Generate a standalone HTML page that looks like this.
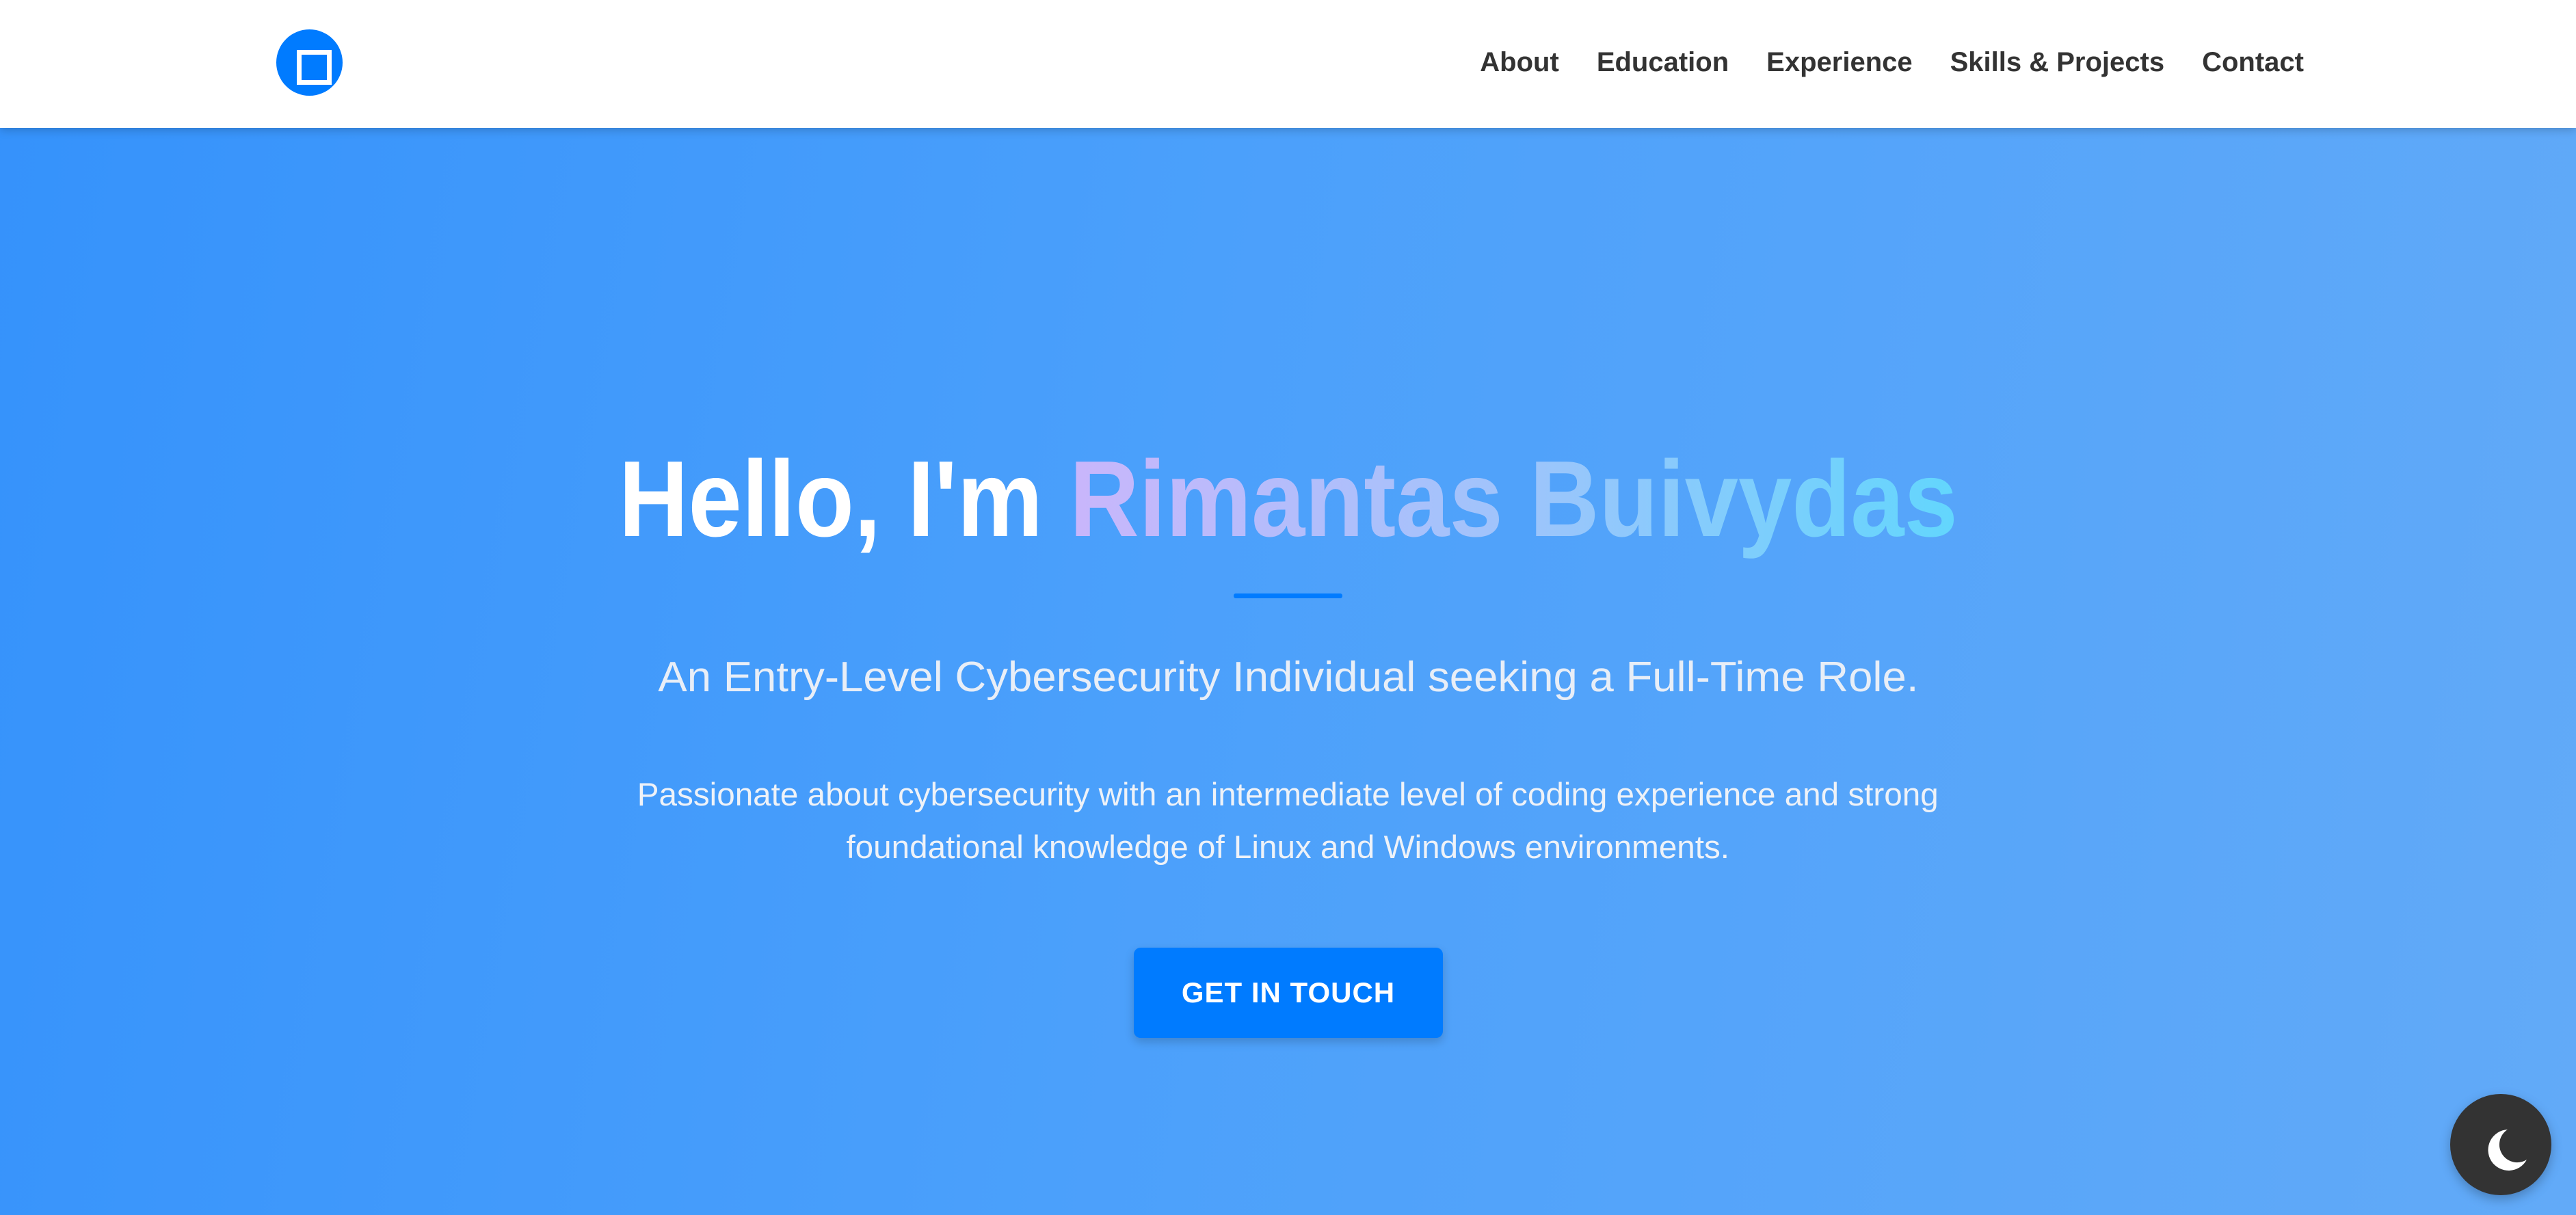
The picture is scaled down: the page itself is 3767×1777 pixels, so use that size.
<!DOCTYPE html>
<html><head><meta charset="utf-8"><style>
*{margin:0;padding:0;box-sizing:border-box}
html,body{width:3767px;height:1777px;overflow:hidden;font-family:"Liberation Sans",sans-serif}
body{background:linear-gradient(100deg,#3592fb 0%,#4ba0fb 45%,#62aaf8 100%);position:relative}
header{position:absolute;left:0;top:0;width:3767px;height:187px;background:#fff;box-shadow:0 4px 12px rgba(0,0,0,.18);z-index:2}
.logo{position:absolute;left:404px;top:43px;width:97px;height:97px;border-radius:50%;background:#007bff}
.logo:after{content:"";position:absolute;left:30px;top:30px;width:37px;height:37px;border:7px solid #fff}
nav{position:absolute;right:398px;top:69px;display:flex;gap:55px;font-weight:bold;font-size:40px;color:#333;white-space:nowrap}
.c{position:absolute;left:0;width:3767px;text-align:center;white-space:nowrap}
h1{font-size:158px;font-weight:bold;color:#fff}
h1 .in{display:inline-block;transform:scaleX(.891)}
.name{background:linear-gradient(90deg,#c9b6fb,#9fc4fb 50%,#62d6fd);-webkit-background-clip:text;background-clip:text;color:transparent}
.bar{position:absolute;left:1804px;top:868px;width:159px;height:7px;background:#007bff;border-radius:3px}
.sub{top:955px;font-size:62px;color:#e8eef7}
.sub .in{display:inline-block;transform:scaleX(1.024)}
.p .in{display:inline-block;transform:scaleX(1.013)}
.p{top:1123px;font-size:47px;line-height:77px;color:#eef2f8}
.btn{position:absolute;left:1658px;top:1386px;width:452px;height:132px;background:#007bff;border-radius:10px;box-shadow:0 6px 14px rgba(0,0,0,.18);color:#fff;font-weight:bold;font-size:42px;letter-spacing:1px;text-align:center;line-height:132px}
.moon{position:absolute;left:3583px;top:1600px;width:148px;height:148px;border-radius:50%;background:#333;box-shadow:0 6px 16px rgba(0,0,0,.25)}
</style></head><body>
<header><div class="logo"></div>
<nav><span>About</span><span>Education</span><span>Experience</span><span>Skills &amp; Projects</span><span>Contact</span></nav></header>
<div class="c" style="top:640px"><h1><span class="in">Hello, I'm <span class="name">Rimantas Buivydas</span></span></h1></div>
<div class="bar"></div>
<div class="c sub"><span class="in">An Entry-Level Cybersecurity Individual seeking a Full-Time Role.</span></div>
<div class="c p"><span class="in">Passionate about cybersecurity with an intermediate level of coding experience and strong<br>foundational knowledge of Linux and Windows environments.</span></div>
<div class="btn">GET IN TOUCH</div>
<div class="moon"><svg width="148" height="148" viewBox="0 0 148 148"><path d="M84 52 A30 30 0 1 0 112 96 A26 26 0 0 1 84 52 Z" fill="#fff"/></svg></div>
</body></html>
